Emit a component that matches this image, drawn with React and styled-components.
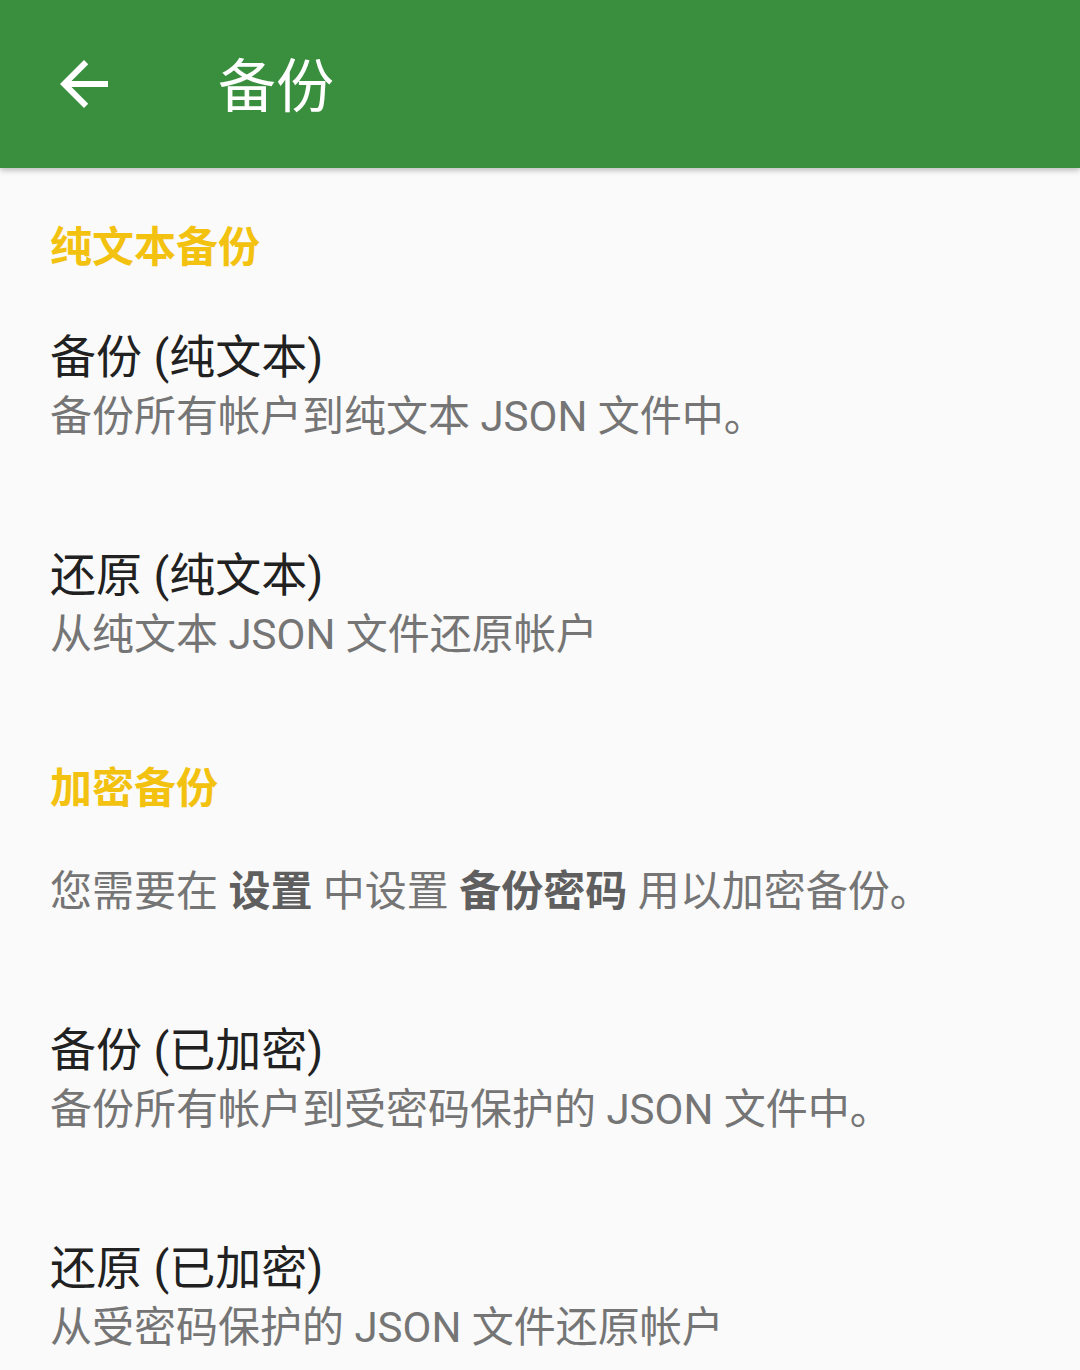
import React from "react";
import styled, { createGlobalStyle } from "styled-components";

const GlobalStyle = createGlobalStyle`
  html, body {
    margin: 0;
    padding: 0;
    background: #fafafa;
  }
  body {
    font-family: Roboto, "Noto Sans CJK SC", sans-serif;
  }
`;

const Page = styled.div`
  width: 1080px;
  min-height: 1370px;
  background: #fafafa;
  overflow: hidden;
`;

const Toolbar = styled.header`
  height: 168px;
  background: #3a8f3e;
  display: flex;
  align-items: center;
  box-shadow: 0 2px 6px rgba(0, 0, 0, 0.28);
  position: relative;
  z-index: 1;
`;

const BackButton = styled.button`
  width: 72px;
  height: 72px;
  margin-left: 48px;
  padding: 0;
  border: none;
  background: none;
  display: flex;
  align-items: center;
  justify-content: center;
`;

const ToolbarTitle = styled.h1`
  margin: 6px 0 0 98px;
  font-size: 58px;
  font-weight: 400;
  color: #ffffff;
  line-height: 1;
`;

const List = styled.div`
  display: flex;
  flex-direction: column;
`;

const Category = styled.div`
  padding: ${(p) => (p.$first ? "55px 50px 5px" : "50px 50px 10px")};
  height: 50px;
  line-height: 50px;
  font-size: 42px;
  font-weight: 700;
  color: #f3c211;
`;

const Item = styled.div`
  padding: 49px 50px;
  display: flex;
  flex-direction: column;
`;

const Info = styled.div`
  padding: 38px 50px 49px;
  line-height: 60px;
  font-size: 42px;
  color: #757575;

  b {
    color: #5f5f5f;
    font-weight: 700;
  }
`;

const Title = styled.div`
  font-size: 46px;
  line-height: 60px;
  color: #212121;
`;

const Summary = styled.div`
  font-size: 42px;
  line-height: 60px;
  color: #757575;
`;

const sections = [
  {
    title: "纯文本备份",
    items: [
      { title: "备份 (纯文本)", summary: "备份所有帐户到纯文本 JSON 文件中。" },
      { title: "还原 (纯文本)", summary: "从纯文本 JSON 文件还原帐户" },
    ],
  },
  {
    title: "加密备份",
    info: true,
    items: [
      { title: "备份 (已加密)", summary: "备份所有帐户到受密码保护的 JSON 文件中。" },
      { title: "还原 (已加密)", summary: "从受密码保护的 JSON 文件还原帐户" },
    ],
  },
];

const App = () => {
  return (
    <Page>
      <GlobalStyle />
      <Toolbar>
        <BackButton aria-label="返回">
          <svg width="72" height="72" viewBox="0 0 24 24">
            <path
              fill="#ffffff"
              d="M20 11H7.83l5.59-5.59L12 4l-8 8 8 8 1.41-1.41L7.83 13H20v-2z"
            />
          </svg>
        </BackButton>
        <ToolbarTitle>备份</ToolbarTitle>
      </Toolbar>
      <List>
        {sections.map((section, i) => (
          <React.Fragment key={section.title}>
            <Category $first={i === 0}>{section.title}</Category>
            {section.info && (
              <Info>
                您需要在 <b>设置</b> 中设置 <b>备份密码</b> 用以加密备份。
              </Info>
            )}
            {section.items.map((item) => (
              <Item key={item.title}>
                <Title>{item.title}</Title>
                <Summary>{item.summary}</Summary>
              </Item>
            ))}
          </React.Fragment>
        ))}
      </List>
    </Page>
  );
};

export default App;
